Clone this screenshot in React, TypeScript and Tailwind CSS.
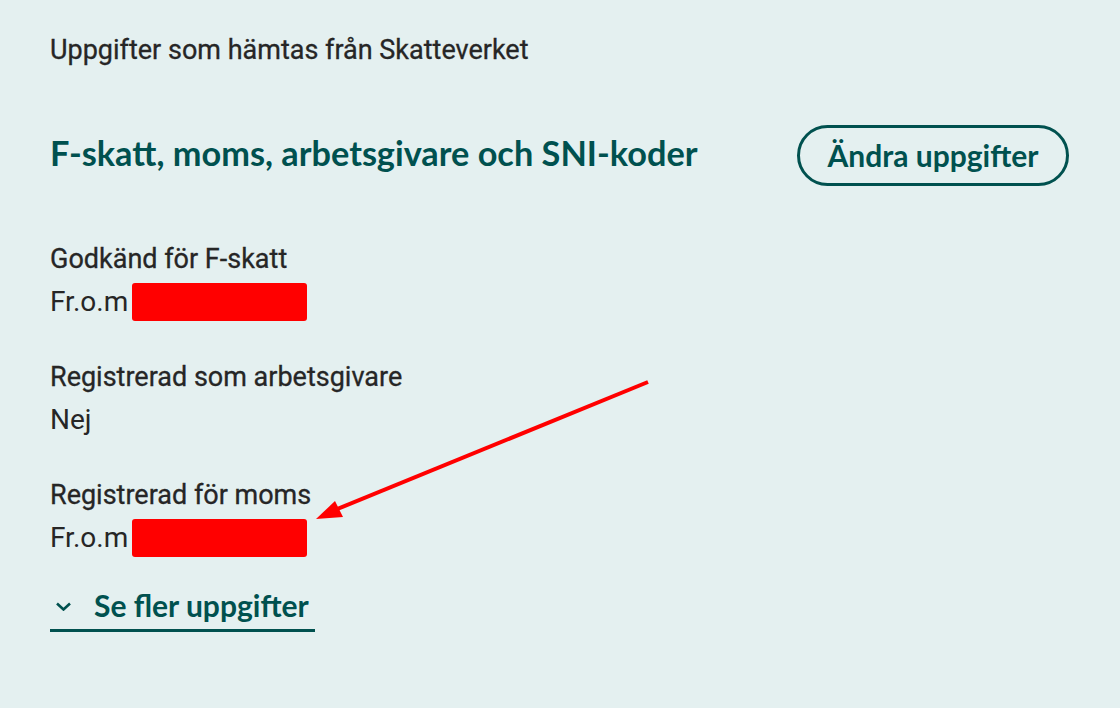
import React from 'react';

const teal = 'text-[#00514f]';

const Field: React.FC<{ label: string; value: string; redacted?: boolean }> = ({ label, value, redacted }) => (
  <div className="flex flex-col">
    <div className="text-[27px] leading-[34px] text-[#262626] [-webkit-text-stroke:0.3px_#262626]">{label}</div>
    <div className="flex items-center h-[52px] text-[28px] text-[#262626]">
      <span>{value}</span>
      {redacted && <span className="ml-[4px] w-[175px] h-[38px] rounded-[3px] bg-[#ff0000]" />}
    </div>
  </div>
);

export default function App() {
  return (
    <div
      className="relative w-[1120px] h-[708px] bg-[#e4f0f0] overflow-hidden"
      style={{ fontFamily: 'Roboto, "Liberation Sans", sans-serif' }}
    >
      <div className="flex flex-col pl-[50px] pr-[51px] pt-[34px]">
        <div className="text-[27px] leading-[32px] text-[#262626] [-webkit-text-stroke:0.3px_#262626]">
          Uppgifter som hämtas från Skatteverket
        </div>

        <div className="flex items-center justify-between mt-[59px]">
          <h2 className={`text-[34.3px] font-bold pb-[6px] ${teal}`} style={{ fontFamily: 'Lato, sans-serif' }}>
            F-skatt, moms, arbetsgivare och SNI-koder
          </h2>
          <button
            className={`h-[61px] w-[272px] rounded-full border-[3px] border-[#00514f] text-[30px] font-bold ${teal}`}
            style={{ fontFamily: 'Lato, sans-serif' }}
          >
            Ändra uppgifter
          </button>
        </div>

        <div className="flex flex-col gap-[32px] mt-[56px]">
          <Field label="Godkänd för F-skatt" value="Fr.o.m" redacted />
          <Field label="Registrerad som arbetsgivare" value="Nej" />
          <Field label="Registrerad för moms" value="Fr.o.m" redacted />
        </div>

        <div className="mt-[23px]">
          <button className={`flex items-center w-[265px] h-[45px] pb-[6px] border-b-[3px] border-[#00514f] ${teal}`}>
            <svg width="17" height="9" viewBox="0 0 17 9" className="ml-[5px] mr-[22px] mt-[2px]">
              <path d="M2 1.5 L8.5 7.5 L15 1.5" fill="none" stroke="#00514f" strokeWidth="2.6" />
            </svg>
            <span className="text-[30px] leading-[36px] font-bold" style={{ fontFamily: 'Lato, sans-serif' }}>
              Se fler uppgifter
            </span>
          </button>
        </div>
      </div>

      <svg className="absolute left-0 top-0 pointer-events-none" width="1120" height="708">
        <line x1="648" y1="382" x2="330" y2="512" stroke="#ff0000" strokeWidth="4" />
        <polygon points="316,519 335,501 343,517" fill="#ff0000" />
      </svg>
    </div>
  );
}
